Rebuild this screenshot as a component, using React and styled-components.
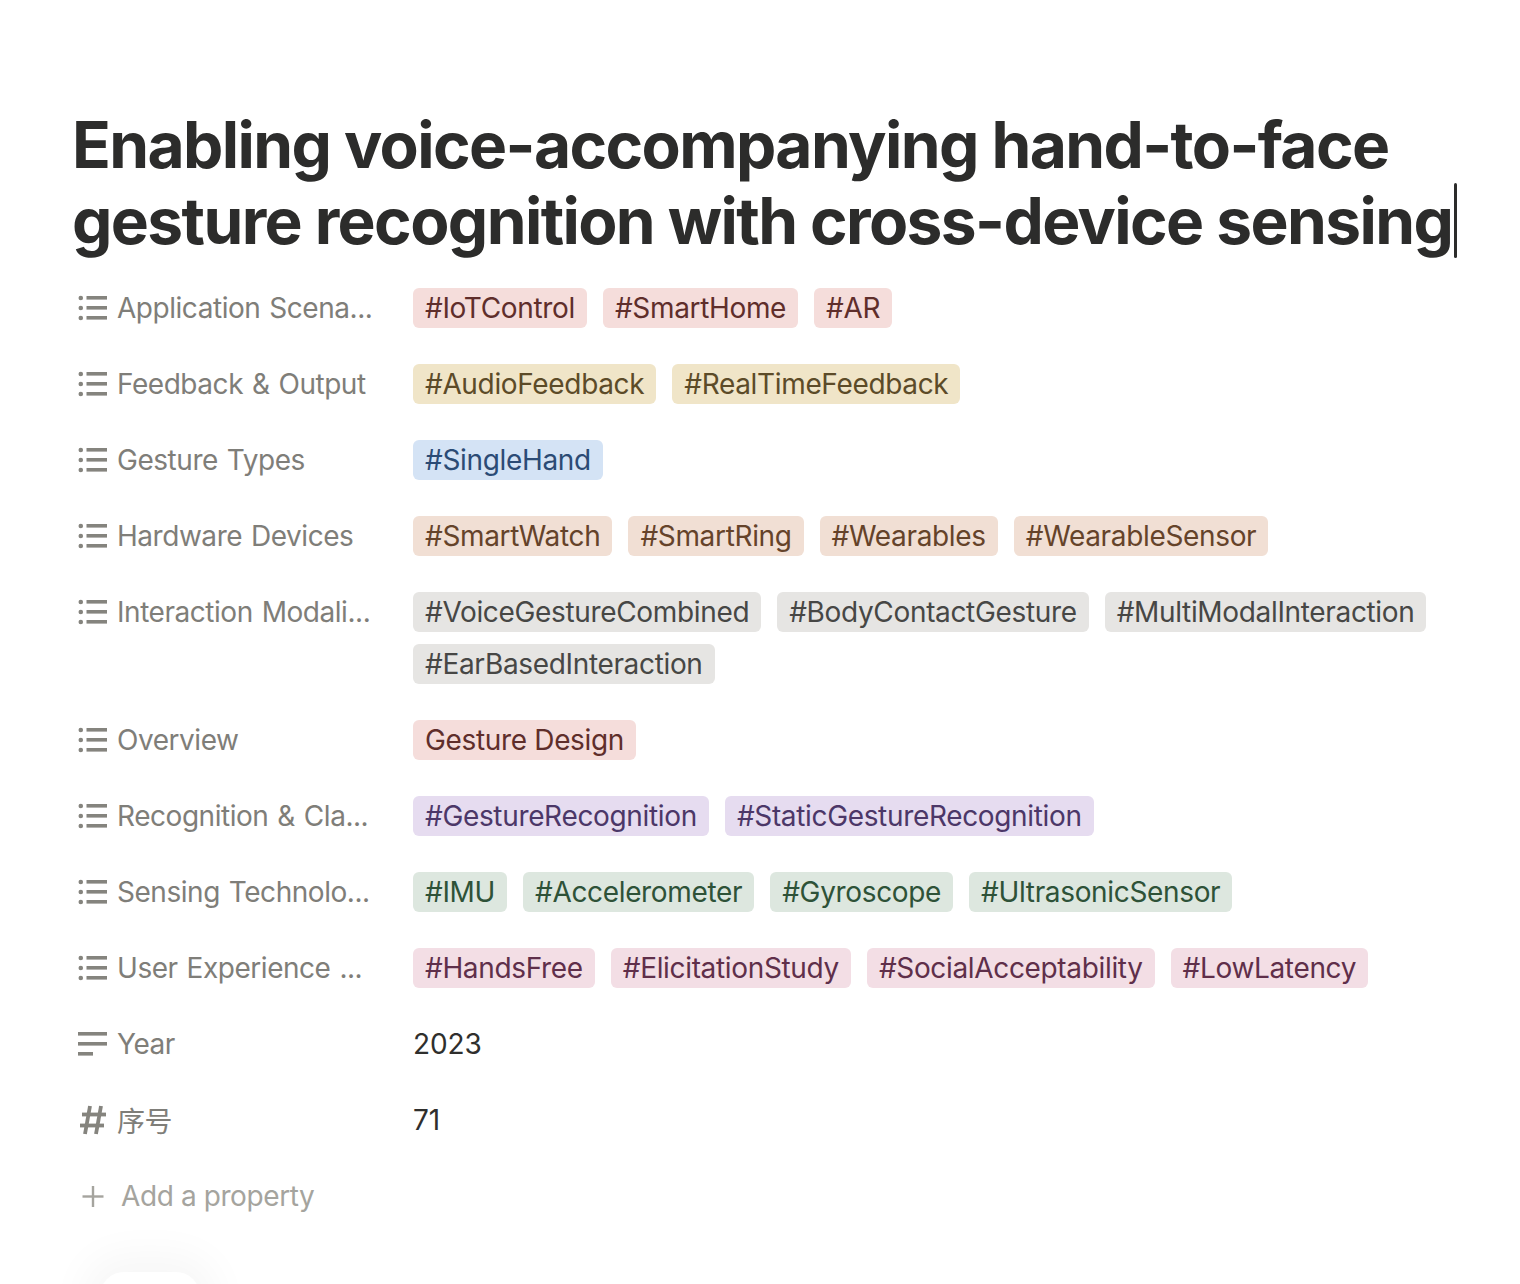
import React from 'react';
import styled, { createGlobalStyle } from 'styled-components';

const GlobalStyle = createGlobalStyle`
  html, body {
    margin: 0;
    padding: 0;
    background: #fff;
  }
  body {
    font-family: Inter, 'Noto Sans CJK SC', sans-serif;
  }
`;

const Page = styled.div`
  position: relative;
  width: 1520px;
  height: 1284px;
  overflow: hidden;
  padding: 107px 0 0 73px;
  box-sizing: border-box;
`;

const Title = styled.h1`
  margin: 0 0 17px -1px;
  width: 1400px;
  font-size: 64px;
  line-height: 76px;
  font-weight: 700;
  letter-spacing: -1.6px;
  color: #2c2c2b;
`;

const Caret = styled.span`
  display: inline-block;
  width: 3px;
  height: 75px;
  margin-left: 2px;
  margin-right: -5px;
  vertical-align: -14px;
  background: #2c2c2b;
  border-radius: 2px;
`;

const Rows = styled.div`
  display: flex;
  flex-direction: column;
  gap: 12px;
`;

const Row = styled.div`
  display: flex;
  min-height: 64px;
`;

const Label = styled.div`
  display: flex;
  align-items: center;
  flex: none;
  width: 340px;
  height: 64px;
  color: #7f7e79;
  font-size: 28px;
  letter-spacing: -0.46px;
  word-spacing: 1.5px;
  white-space: nowrap;
`;

const IconSlot = styled.span`
  display: flex;
  align-items: center;
  justify-content: center;
  flex: none;
  width: 40px;
  height: 40px;
  margin-right: 4px;
  color: #85847e;
`;

const Values = styled.div`
  display: flex;
  flex-wrap: wrap;
  align-items: center;
  gap: 12px 16px;
  flex: 1;
  min-height: 40px;
  padding: 12px 0;
`;

const Tag = styled.span`
  display: inline-block;
  height: 40px;
  line-height: 40px;
  padding: 0 12px;
  border-radius: 6px;
  font-size: 28px;
  letter-spacing: -0.34px;
  white-space: nowrap;
  background: ${p => p.$bg};
  color: ${p => p.$fg};
`;

const PlainValue = styled.span`
  font-size: 28px;
  line-height: 40px;
  color: #2f2f2d;
  letter-spacing: -0.1px;
`;

const AddRow = styled.div`
  display: flex;
  align-items: center;
  height: 64px;
  margin-top: 12px;
  color: #a5a49e;
  font-size: 28px;
  letter-spacing: -0.4px;
`;

const AddIcon = styled.span`
  display: flex;
  align-items: center;
  justify-content: center;
  width: 40px;
  height: 40px;
  margin-right: 8px;
`;

const Bubble = styled.div`
  position: absolute;
  left: 100px;
  top: 1272px;
  width: 100px;
  height: 60px;
  border-radius: 24px;
  background: #fff;
  box-shadow: 0 0 40px 18px rgba(0, 0, 0, 0.035);
`;

const COLORS = {
  red: ['#f5dddb', '#5f2e2b'],
  yellow: ['#f0e5c8', '#5c4b28'],
  blue: ['#d4e3f5', '#2b4b75'],
  brown: ['#f1dfd4', '#65432a'],
  gray: ['#e6e5e3', '#474745'],
  purple: ['#e6dcf0', '#4c3768'],
  green: ['#dde7df', '#2e5238'],
  pink: ['#f3dee5', '#5f2f4a'],
};

const ListIcon = () => (
  <svg width="30" height="26" viewBox="0 0 30 26" fill="#85847e">
    <circle cx="2.8" cy="3" r="2.3" />
    <circle cx="2.8" cy="13" r="2.3" />
    <circle cx="2.8" cy="23" r="2.3" />
    <rect x="8.500" y="1" width="20.500" height="3.6" />
    <rect x="8.500" y="11" width="20.500" height="3.6" />
    <rect x="8.500" y="21" width="20.500" height="3.6" />
  </svg>
);

const TextIcon = () => (
  <svg width="30" height="26" viewBox="0 0 30 26" fill="#85847e">
    <rect x="0" y="1" width="29" height="3.6" />
    <rect x="0" y="11" width="29" height="3.6" />
    <rect x="0" y="21" width="15" height="3.6" />
  </svg>
);

const NumberIcon = () => (
  <svg width="28" height="30" viewBox="0 0 28 30" fill="none" stroke="#85847e" strokeWidth="3.8">
    <path d="M11 1 L6 29" />
    <path d="M22 1 L17 29" />
    <path d="M3 9.5 H27" />
    <path d="M1 20.5 H25" />
  </svg>
);

const PlusIcon = () => (
  <svg width="24" height="24" viewBox="0 0 24 24" stroke="#a5a49e" strokeWidth="2.4">
    <path d="M12 2 V23" />
    <path d="M1.500 12.500 H22.500" />
  </svg>
);

const rows = [
  { label: 'Application Scena...', color: 'red', tags: ['#IoTControl', '#SmartHome', '#AR'] },
  { label: 'Feedback & Output', color: 'yellow', tags: ['#AudioFeedback', '#RealTimeFeedback'] },
  { label: 'Gesture Types', color: 'blue', tags: ['#SingleHand'] },
  { label: 'Hardware Devices', color: 'brown', tags: ['#SmartWatch', '#SmartRing', '#Wearables', '#WearableSensor'] },
  { label: 'Interaction Modali...', color: 'gray', tags: ['#VoiceGestureCombined', '#BodyContactGesture', '#MultiModalInteraction', '#EarBasedInteraction'] },
  { label: 'Overview', color: 'red', tags: ['Gesture Design'] },
  { label: 'Recognition & Cla...', color: 'purple', tags: ['#GestureRecognition', '#StaticGestureRecognition'] },
  { label: 'Sensing Technolo...', color: 'green', tags: ['#IMU', '#Accelerometer', '#Gyroscope', '#UltrasonicSensor'] },
  { label: 'User Experience ...', color: 'pink', tags: ['#HandsFree', '#ElicitationStudy', '#SocialAcceptability', '#LowLatency'] },
];

const App = () => (
  <Page>
    <GlobalStyle />
    <Title>
      Enabling voice-accompanying hand-to-face gesture recognition with cross-device sensing
      <Caret />
    </Title>
    <Rows>
      {rows.map(row => (
        <Row key={row.label}>
          <Label>
            <IconSlot><ListIcon /></IconSlot>
            {row.label}
          </Label>
          <Values>
            {row.tags.map(tag => (
              <Tag key={tag} $bg={COLORS[row.color][0]} $fg={COLORS[row.color][1]}>{tag}</Tag>
            ))}
          </Values>
        </Row>
      ))}
      <Row>
        <Label>
          <IconSlot><TextIcon /></IconSlot>
          Year
        </Label>
        <Values><PlainValue>2023</PlainValue></Values>
      </Row>
      <Row>
        <Label>
          <IconSlot><NumberIcon /></IconSlot>
          序号
        </Label>
        <Values><PlainValue>71</PlainValue></Values>
      </Row>
    </Rows>
    <AddRow>
      <AddIcon><PlusIcon /></AddIcon>
      Add a property
    </AddRow>
    <Bubble />
  </Page>
);

export default App;
